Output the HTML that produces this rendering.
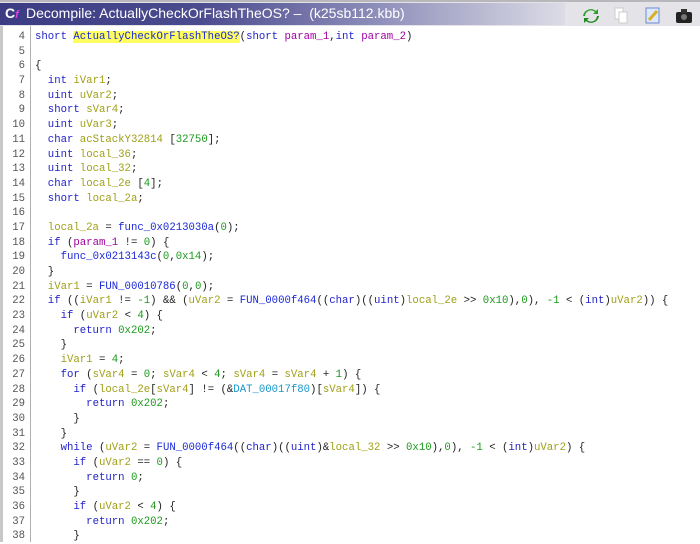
<!DOCTYPE html>
<html><head><meta charset="utf-8"><style>
body{margin:0;width:700px;height:542px;overflow:hidden;background:#fff;font-family:"Liberation Mono",monospace;}
#title{position:absolute;left:0;top:0;width:700px;height:26px;background:#e4e4e8;border-top:2px solid #b8b8bc;box-sizing:border-box;}
#tg{position:absolute;left:0;top:1px;width:565px;height:22px;background:linear-gradient(90deg,#3c3c84 0%,#4a4a8e 35%,#8a8ab8 65%,#dcdce6 100%);}
#tt{position:absolute;left:26px;top:3px;color:#fff;font-family:"Liberation Sans",sans-serif;font-size:14px;white-space:pre;}
#logo{position:absolute;left:5px;top:3px;color:#fff;font:bold 14px "Liberation Sans",sans-serif;}
#logo i{color:#e040e0;font-size:11px;}
#lb{position:absolute;left:0;top:26px;width:3px;height:516px;background:#c8c8c8;}
#gut{position:absolute;left:3px;top:26px;width:27px;height:516px;background:#fff;border-right:1px solid #b0b0b0;}
pre{margin:0;position:absolute;top:30px;font-size:10.67px;line-height:14.68px;font-family:"Liberation Mono",monospace;}
#nums{left:4px;width:21px;text-align:right;color:#555;}
#code{left:35px;color:#222;}
.k{color:#2222c8}.v{color:#a0a018}.n{color:#1c9a1c}.f{color:#1a28d8}.p{color:#a000a0}.d{color:#1898c8}.h{background:#ffff60}
.ic{position:absolute;top:5px;}
</style></head><body>
<div id="title"><div id="tg"></div><div id="logo">C<i>f</i></div><div id="tt">Decompile: ActuallyCheckOrFlashTheOS? –  (k25sb112.kbb)</div>
<svg class="ic" style="left:582px" width="18" height="18" viewBox="0 0 18 18"><path d="M3 9a6 6 0 0 1 10-4l-2 2h5V2l-2 2A8 8 0 0 0 1 9z" fill="#2aa02a"/><path d="M15 9a6 6 0 0 1-10 4l2-2H2v5l2-2a8 8 0 0 0 13-5z" fill="#1c8a1c"/></svg>
<svg class="ic" style="left:614px" width="16" height="18" viewBox="0 0 16 18"><rect x="1" y="1" width="8" height="11" fill="#fff" stroke="#ccc"/><rect x="5" y="5" width="8" height="11" fill="#fff" stroke="#ccc"/></svg>
<svg class="ic" style="left:645px" width="16" height="18" viewBox="0 0 16 18"><rect x="1" y="1" width="13" height="15" fill="#dde8ff" stroke="#6a8ad0"/><path d="M4 13l8-9" stroke="#d8b020" stroke-width="3"/></svg>
<svg class="ic" style="left:675px" width="18" height="18" viewBox="0 0 18 18"><rect x="1" y="5" width="16" height="11" rx="2" fill="#222"/><rect x="6" y="2" width="6" height="4" fill="#333"/><circle cx="9" cy="10" r="3" fill="#777"/></svg>
</div>
<div id="lb"></div><div id="gut"></div>
<pre id="nums">4
5
6
7
8
9
10
11
12
13
14
15
16
17
18
19
20
21
22
23
24
25
26
27
28
29
30
31
32
33
34
35
36
37
38</pre>
<pre id="code"><span class="k">short</span> <span class="f h">ActuallyCheckOrFlashTheOS?</span>(<span class="k">short</span> <span class="p">param_1</span>,<span class="k">int</span> <span class="p">param_2</span>)

{
  <span class="k">int</span> <span class="v">iVar1</span>;
  <span class="k">uint</span> <span class="v">uVar2</span>;
  <span class="k">short</span> <span class="v">sVar4</span>;
  <span class="k">uint</span> <span class="v">uVar3</span>;
  <span class="k">char</span> <span class="v">acStackY32814</span> [<span class="n">32750</span>];
  <span class="k">uint</span> <span class="v">local_36</span>;
  <span class="k">uint</span> <span class="v">local_32</span>;
  <span class="k">char</span> <span class="v">local_2e</span> [<span class="n">4</span>];
  <span class="k">short</span> <span class="v">local_2a</span>;

  <span class="v">local_2a</span> = <span class="f">func_0x0213030a</span>(<span class="n">0</span>);
  <span class="k">if</span> (<span class="p">param_1</span> != <span class="n">0</span>) {
    <span class="f">func_0x0213143c</span>(<span class="n">0</span>,<span class="n">0x14</span>);
  }
  <span class="v">iVar1</span> = <span class="f">FUN_00010786</span>(<span class="n">0</span>,<span class="n">0</span>);
  <span class="k">if</span> ((<span class="v">iVar1</span> != <span class="n">-1</span>) &amp;&amp; (<span class="v">uVar2</span> = <span class="f">FUN_0000f464</span>((<span class="k">char</span>)((<span class="k">uint</span>)<span class="v">local_2e</span> &gt;&gt; <span class="n">0x10</span>),<span class="n">0</span>), <span class="n">-1</span> &lt; (<span class="k">int</span>)<span class="v">uVar2</span>)) {
    <span class="k">if</span> (<span class="v">uVar2</span> &lt; <span class="n">4</span>) {
      <span class="k">return</span> <span class="n">0x202</span>;
    }
    <span class="v">iVar1</span> = <span class="n">4</span>;
    <span class="k">for</span> (<span class="v">sVar4</span> = <span class="n">0</span>; <span class="v">sVar4</span> &lt; <span class="n">4</span>; <span class="v">sVar4</span> = <span class="v">sVar4</span> + <span class="n">1</span>) {
      <span class="k">if</span> (<span class="v">local_2e</span>[<span class="v">sVar4</span>] != (&amp;<span class="d">DAT_00017f80</span>)[<span class="v">sVar4</span>]) {
        <span class="k">return</span> <span class="n">0x202</span>;
      }
    }
    <span class="k">while</span> (<span class="v">uVar2</span> = <span class="f">FUN_0000f464</span>((<span class="k">char</span>)((<span class="k">uint</span>)&amp;<span class="v">local_32</span> &gt;&gt; <span class="n">0x10</span>),<span class="n">0</span>), <span class="n">-1</span> &lt; (<span class="k">int</span>)<span class="v">uVar2</span>) {
      <span class="k">if</span> (<span class="v">uVar2</span> == <span class="n">0</span>) {
        <span class="k">return</span> <span class="n">0</span>;
      }
      <span class="k">if</span> (<span class="v">uVar2</span> &lt; <span class="n">4</span>) {
        <span class="k">return</span> <span class="n">0x202</span>;
      }</pre>
</body></html>
